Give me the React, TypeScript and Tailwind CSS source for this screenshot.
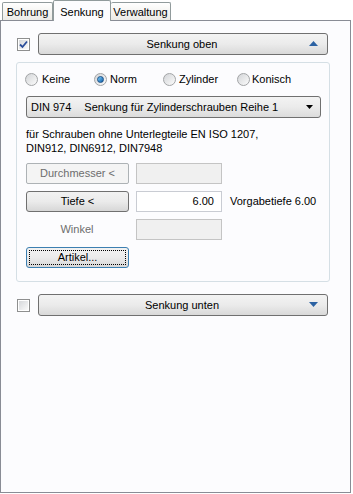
import React from 'react';

const font = { fontFamily: '"Liberation Sans", Arial, sans-serif' };

function Checkbox({ checked }: { checked?: boolean }) {
  return (
    <div className="w-[13px] h-[13px] border border-[#8e8f8f] bg-white p-px shrink-0">
      <div className="w-full h-full bg-gradient-to-br from-[#d6d8db] to-[#fafafa] flex items-center justify-center">
        {checked && (
          <svg width="9" height="9" viewBox="0 0 9 9">
            <path d="M1 4.5 L3.5 7 L8 1.5" stroke="#2a4d9a" strokeWidth="1.8" fill="none" />
          </svg>
        )}
      </div>
    </div>
  );
}

function Radio({ checked }: { checked?: boolean }) {
  return (
    <div className="w-[13px] h-[13px] rounded-full border border-[#a2a4a6] bg-gradient-to-br from-[#d3d5d8] to-[#fbfbfb] flex items-center justify-center shrink-0">
      {checked && <div className="w-[7px] h-[7px] rounded-full bg-gradient-to-br from-[#7ad0ff] to-[#0b5ea6] border border-[#1a4f86]" />}
    </div>
  );
}

function ToggleBar({ label, up }: { label: string; up?: boolean }) {
  return (
    <div className="relative w-[290px] h-[22px] rounded-[3px] border border-[#707070] bg-gradient-to-b from-[#f3f3f3] via-[#ebebeb] to-[#d9d9d9] flex items-center justify-center text-[11px] text-black">
      <span className="-ml-[2px]">{label}</span>
      <svg className="absolute right-[9px] top-[7px]" width="9" height="6" viewBox="0 0 9 6">
        {up ? <path d="M0 5 L4.5 0 L9 5 Z" fill="#2c62a3" /> : <path d="M0 0 L9 0 L4.5 5 Z" fill="#2c62a3" />}
      </svg>
    </div>
  );
}

function Btn({ label, disabled, focused }: { label: string; disabled?: boolean; focused?: boolean }) {
  if (disabled) {
    return (
      <div className="w-[103px] h-[21px] rounded-[2px] border border-[#adb2b5] bg-[#f4f4f4] flex items-center justify-center text-[11px] text-[#6d6d6d]">
        {label}
      </div>
    );
  }
  return (
    <div
      className={
        'w-[103px] h-[21px] rounded-[3px] border bg-gradient-to-b from-[#f2f2f2] via-[#ebebeb] to-[#d7d7d7] flex items-center justify-center text-[11px] text-black ' +
        (focused ? 'border-[#3c7fb1] p-[2px]' : 'border-[#707070]')
      }
    >
      {focused ? (
        <div className="w-full h-full border border-dotted border-black flex items-center justify-center">{label}</div>
      ) : (
        label
      )}
    </div>
  );
}

function Field({ value, disabled }: { value?: string; disabled?: boolean }) {
  return (
    <div
      className={
        'w-[86px] h-[21px] border flex items-center justify-end pr-[7px] text-[11px] text-black ' +
        (disabled ? 'border-[#c4c4c4] bg-[#f0f0f0]' : 'border-[#c9ccd3] bg-white')
      }
    >
      {value}
    </div>
  );
}

export default function App() {
  return (
    <div className="w-[353px] h-[494px] bg-white text-[11px] text-black" style={font}>
      {/* tabs */}
      <div className="relative z-10 flex items-end h-[21px] pl-[2px]">
        <div className="h-[18px] mb-px w-[51px] border border-b-0 border-[#919b9c] rounded-t-[2px] bg-gradient-to-b from-white to-[#ecebe6] flex items-center justify-center pt-px">
          Bohrung
        </div>
        <div className="h-[21px] w-[58px] border border-b-0 border-[#919b9c] rounded-t-[2px] bg-[#fcfcfe] flex items-start justify-center pt-[3px]">
          Senkung
        </div>
        <div className="h-[18px] mb-px w-[60px] border border-b-0 border-l-0 border-[#919b9c] rounded-t-[2px] bg-gradient-to-b from-white to-[#ecebe6] flex items-center justify-center pt-px">
          Verwaltung
        </div>
      </div>

      {/* panel */}
      <div className="-mt-px w-[351px] h-[473px] border border-[#898c95] bg-[#fcfcfe] pt-[12px]">
        <div className="flex items-center gap-[8px] pl-[16px]">
          <Checkbox checked />
          <ToggleBar label="Senkung oben" up />
        </div>

        <div className="ml-[15px] mt-[7px] w-[314px] h-[220px] rounded-[3px] border border-[#d5dfe5] pt-[9px] pl-[8px]">
          <div className="flex items-center h-[14px]">
            <div className="w-[69px] flex items-center gap-[4px]">
              <Radio />
              <span>Keine</span>
            </div>
            <div className="w-[69px] flex items-center gap-[3px]">
              <Radio checked />
              <span>Norm</span>
            </div>
            <div className="w-[74px] flex items-center gap-[3px]">
              <Radio />
              <span>Zylinder</span>
            </div>
            <div className="flex items-center gap-[2px]">
              <Radio />
              <span>Konisch</span>
            </div>
          </div>

          <div className="mt-[10px] ml-px relative w-[295px] h-[22px] rounded-[3px] border border-[#707070] bg-gradient-to-b from-[#f3f3f3] via-[#ebebeb] to-[#dcdcdc] flex items-center pl-[4px]">
            <span>DIN 974</span>
            <span className="ml-[13px]">Senkung für Zylinderschrauben Reihe 1</span>
            <svg className="absolute right-[7px] top-[8px]" width="7" height="4" viewBox="0 0 7 4">
              <path d="M0 0 L7 0 L3.5 4 Z" fill="#000" />
            </svg>
          </div>

          <div className="mt-[9px] ml-px leading-[14px]">
            <div>für Schrauben ohne Unterlegteile EN ISO 1207,</div>
            <div>DIN912, DIN6912, DIN7948</div>
          </div>

          <div className="ml-px mt-[8px] flex flex-col gap-[7px]">
            <div className="flex items-center gap-[7px]">
              <Btn label="Durchmesser <" disabled />
              <Field disabled />
            </div>
            <div className="flex items-center gap-[7px]">
              <Btn label="Tiefe <" />
              <Field value="6.00" />
              <span className="ml-px">Vorgabetiefe 6.00</span>
            </div>
            <div className="flex items-center gap-[7px]">
              <div className="w-[103px] text-center text-[#6d6d6d] pr-[1px]">Winkel</div>
              <Field disabled />
            </div>
            <div className="flex items-center">
              <Btn label="Artikel..." focused />
            </div>
          </div>
        </div>

        <div className="mt-[12px] flex items-center gap-[8px] pl-[16px]">
          <Checkbox />
          <ToggleBar label="Senkung unten" />
        </div>
      </div>
    </div>
  );
}
